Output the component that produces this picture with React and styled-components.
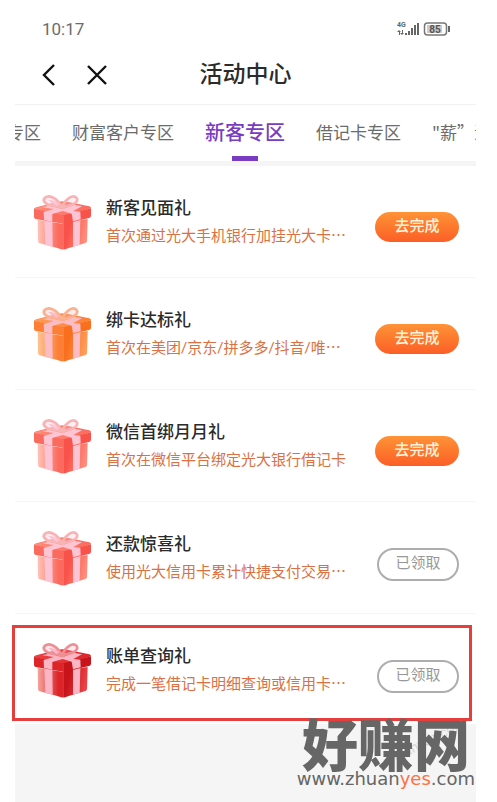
import React, { useId } from "react";
import styled, { createGlobalStyle, css } from "styled-components";

const GlobalStyle = createGlobalStyle`
  *, *::before, *::after { box-sizing: border-box; }
  html, body { margin: 0; background: #fff; }
  body { font-family: Roboto, "Noto Sans CJK SC", sans-serif; color: #2b2b2b; }
  button { font-family: inherit; margin: 0; padding: 0; }
  h1, h2, p { margin: 0; }
`;

const Page = styled.div`
  position: relative;
  display: flex;
  flex-direction: column;
  min-height: 100vh;
  padding: 0 21px 0 15px;
  overflow: hidden;
`;

const StatusBar = styled.div`
  display: flex;
  align-items: center;
  justify-content: space-between;
  height: 50px;
  padding: 8px 26px 0 27px;
  font-size: 17px;
  color: #6c6c6c;
`;

const TopBar = styled.header`
  display: grid;
  grid-template-columns: 1fr auto 1fr;
  align-items: center;
  height: 55px;
  padding: 0 20px 4px;
  border-bottom: 1px solid #f1f1f1;
`;

const BarButtons = styled.div`
  display: flex;
  gap: 20px;
`;

const IconButton = styled.button`
  display: grid;
  place-items: center;
  width: 28px;
  height: 28px;
  border: 0;
  background: none;
  color: #111;
`;

const Title = styled.h1`
  font-size: 23px;
  line-height: 32px;
  font-weight: 500;
`;

const TabStrip = styled.nav`
  display: flex;
  gap: 31px;
  height: 61px;
  overflow: hidden;
  border-bottom: 5px solid #f5f5f5;
`;

const Tab = styled.button`
  flex: none;
  position: relative;
  display: flex;
  justify-content: flex-end;
  height: 56px;
  padding-top: 14px;
  border: 0;
  background: none;
  font-family: "Noto Sans CJK SC", sans-serif;
  font-size: 17px;
  line-height: 26px;
  color: #6b6b6b;
  white-space: nowrap;
  ${(p) => p.$cut && css`width: 26px;`}
  ${(p) =>
    p.$active &&
    css`
      font-size: 20px;
      font-weight: 500;
      color: #7a3cc0;
      &::after {
        content: "";
        position: absolute;
        left: calc(50% - 13px);
        bottom: 0;
        width: 26px;
        height: 5px;
        background: #7a3cc0;
      }
    `}
`;

const List = styled.ul`
  margin: 0;
  padding: 0;
  list-style: none;
`;

const Row = styled.li`
  position: relative;
  display: flex;
  align-items: flex-start;
  height: 112px;
  padding: 27px 17px 0 18px;
  border-bottom: 1px solid #f6f6f6;
  ${(p) =>
    p.$marked &&
    css`
      height: 110px;
      border-bottom: 0;
      &::after {
        content: "";
        position: absolute;
        inset: 11px 4px 3px -3px;
        border: 3px solid #e53e3c;
        z-index: 1;
        pointer-events: none;
      }
    `}
`;

const GiftArt = styled.svg`
  flex: none;
  width: 60px;
  height: 60px;
`;

const RowText = styled.div`
  flex: 1;
  min-width: 0;
  padding: 2px 0 0 13px;
`;

const RowTitle = styled.h2`
  font-size: 17px;
  line-height: 26px;
  font-weight: 500;
`;

const RowNote = styled.p`
  margin-top: 4px;
  font-size: 15px;
  line-height: 22px;
  color: #dc7042;
  white-space: nowrap;
`;

const Action = styled.button`
  flex: none;
  width: ${(p) => (p.$done ? 82 : 84)}px;
  height: ${(p) => (p.$done ? 33 : 30)}px;
  margin-top: 19px;
  padding-bottom: 3px;
  border: ${(p) => (p.$done ? "2px solid #adadad" : "0")};
  border-radius: 17px;
  background: ${(p) => (p.$done ? "#fff" : "linear-gradient(#ff9336, #fb5f27)")};
  font-size: 15px;
  line-height: 22px;
  font-weight: ${(p) => (p.$done ? 400 : 500)};
  color: ${(p) => (p.$done ? "#999" : "#fff3dc")};
`;

const Rest = styled.div`
  flex: 1;
  background: #f5f5f5;
`;

const SiteMark = styled.div`
  position: absolute;
  right: 22px;
  bottom: 14px;
  z-index: 2;
  display: flex;
  flex-direction: column;
  align-items: center;
  color: #666;
`;

const SiteName = styled.div`
  font-family: "Noto Sans CJK SC", sans-serif;
  font-size: 56px;
  line-height: 56px;
  font-weight: 900;
`;

const SiteUrl = styled.div`
  font-family: "DejaVu Sans", sans-serif;
  font-size: 18px;
  line-height: 18px;
  white-space: nowrap;
  span { color: #ff7043; }
`;

const FaintMark = styled.div`
  position: absolute;
  right: 28px;
  bottom: 52px;
  z-index: 1;
  font-size: 14px;
  color: #aaa;
  opacity: 0.4;
  transform: rotate(-27deg);
`;

const palettes = {
  coral: { light: "#ffc4b6", main: "#fb6a5e", deep: "#f9524a", top: "#ff8d7c", ribbon: "#fdc5d3", bow: "#f8b3b5" },
  orange: { light: "#ffc393", main: "#fc7f35", deep: "#fa6f1e", top: "#ff9d5a", ribbon: "#fbbcc4", bow: "#fbb190" },
  red: { light: "#f6a49c", main: "#dc2529", deep: "#c7141b", top: "#ea4245", ribbon: "#fcb5c4", bow: "#ee8f94" },
};

function Gift({ tone }) {
  const c = palettes[tone];
  const id = useId();
  const side = `${id}s`;
  const front = `${id}f`;
  const lid = `${id}l`;
  return (
    <GiftArt viewBox="0 0 180 180" aria-hidden="true">
      <defs>
        <linearGradient id={side} x1="0" x2="1">
          <stop offset="0" stopColor={c.light} />
          <stop offset="0.8" stopColor={c.main} />
        </linearGradient>
        <linearGradient id={front} x1="0" x2="1" y2="0.3">
          <stop offset="0.3" stopColor={c.deep} />
          <stop offset="1" stopColor={c.top} />
        </linearGradient>
        <linearGradient id={lid} x1="0" x2="1">
          <stop offset="0" stopColor={c.top} />
          <stop offset="1" stopColor={c.main} />
        </linearGradient>
      </defs>
      <path d="M14 80 L92 93 V169 Q84 170 73 165 L20 151 Q15 149 15 144Z" fill={`url(#${side})`} />
      <path d="M91 90 L164 78 L162 143 Q162 149 155 151 L105 166 Q97 170 91 169Z" fill={`url(#${front})`} />
      <path d="M34 82 L58 87 L59 161 L37 156Z" fill={c.ribbon} />
      <path d="M120 86 L142 82 L140 156 L120 161Z" fill={c.ribbon} />
      <path d="M3 48 Q4 45 9 43 L75 26 Q89 23 102 26 L169 40 Q174 42 174 46 L93 70Z" fill={`url(#${lid})`} />
      <path d="M3 47 L92 67 V92 Q87 92 82 91 L8 78 Q3 77 3 72Z" fill={c.main} />
      <path d="M91 67 L174 46 V68 Q174 74 168 75 L104 90 Q98 92 91 92Z" fill={c.deep} />
      <path d="M28 43 L49 38 L90 48 L122 35 L147 40 L121 54 L142 56 L143 79 L120 85 L116 62 L89 54 L58 63 V86 L33 81 L32 57 L62 48Z" fill={c.ribbon} />
      <path d="M86 42 C76 20 52 2 36 14 C26 23 39 36 55 37 C70 39 78 42 86 42Z" fill={c.ribbon} fillOpacity="0.35" stroke={c.bow} strokeWidth="8" strokeLinejoin="round" />
      <path d="M86 42 C99 17 119 3 130 14 C140 26 122 38 86 42Z" fill={c.ribbon} fillOpacity="0.25" stroke={c.bow} strokeWidth="8" strokeLinejoin="round" />
      <path d="M82 35 Q66 20 46 21 Q60 36 82 43Z" fill={c.ribbon} />
      <path d="M73 36 Q86 30 98 36 L95 48 Q84 51 74 46Z" fill={c.bow} />
    </GiftArt>
  );
}

const offers = [
  { title: "新客见面礼", note: "首次通过光大手机银行加挂光大卡⋯", tone: "coral" },
  { title: "绑卡达标礼", note: "首次在美团/京东/拼多多/抖音/唯⋯", tone: "orange" },
  { title: "微信首绑月月礼", note: "首次在微信平台绑定光大银行借记卡", tone: "coral" },
  { title: "还款惊喜礼", note: "使用光大信用卡累计快捷支付交易⋯", tone: "coral", done: true },
  { title: "账单查询礼", note: "完成一笔借记卡明细查询或信用卡⋯", tone: "red", done: true, marked: true },
];

function StatusIcons() {
  return (
    <svg width="53" height="16" viewBox="0 0 53 16" aria-label="4G, 85%">
      <g fill="#666">
        <text x="0" y="6" fontSize="7" fontWeight="700" fontFamily="Roboto, sans-serif">4G</text>
        <path d="M2 9 L4 11 H3 V14 H2 V11 H0Z M5 14 L3 12 H5 V9 H6 V12 H7Z" />
        <path d="M8 12h2v2H8z M11 10h2v4h-2z M14 7h2v7h-2z M17 4h2v10h-2z M20 2h2v12h-2z" />
        <path d="M51 5h2v6h-2z" />
      </g>
      <rect x="27.5" y="2" width="22" height="12" rx="3" fill="none" stroke="#777" strokeWidth="1.5" />
      <rect x="30" y="4" width="15" height="8" fill="#ccc" />
      <text x="38" y="12" textAnchor="middle" fontSize="10" fontWeight="700" fontFamily="Roboto, sans-serif" fill="#555">85</text>
    </svg>
  );
}

export default function App() {
  return (
    <>
      <GlobalStyle />
      <Page>
        <StatusBar>
          <span>10:17</span>
          <StatusIcons />
        </StatusBar>
        <TopBar>
          <BarButtons>
            <IconButton aria-label="返回">
              <svg width="28" height="28" viewBox="0 0 28 28" fill="none" stroke="currentColor" strokeWidth="2.4">
                <path d="M19 4 L9 14 L19 24" />
              </svg>
            </IconButton>
            <IconButton aria-label="关闭">
              <svg width="28" height="28" viewBox="0 0 28 28" fill="none" stroke="currentColor" strokeWidth="2.4">
                <path d="M5 5 L23 23 M23 5 L5 23" />
              </svg>
            </IconButton>
          </BarButtons>
          <Title>活动中心</Title>
        </TopBar>
        <TabStrip>
          <Tab $cut>专区</Tab>
          <Tab>财富客户专区</Tab>
          <Tab $active>新客专区</Tab>
          <Tab>借记卡专区</Tab>
          <Tab>"薪”活</Tab>
        </TabStrip>
        <List>
          {offers.map((o) => (
            <Row key={o.title} $marked={o.marked}>
              <Gift tone={o.tone} />
              <RowText>
                <RowTitle>{o.title}</RowTitle>
                <RowNote>{o.note}</RowNote>
              </RowText>
              <Action $done={o.done}>{o.done ? "已领取" : "去完成"}</Action>
            </Row>
          ))}
        </List>
        <Rest />
        <FaintMark>zhuanyes.com</FaintMark>
        <SiteMark>
          <SiteName>好赚网</SiteName>
          <SiteUrl>www.zhuan<span>yes</span>.com</SiteUrl>
        </SiteMark>
      </Page>
    </>
  );
}
